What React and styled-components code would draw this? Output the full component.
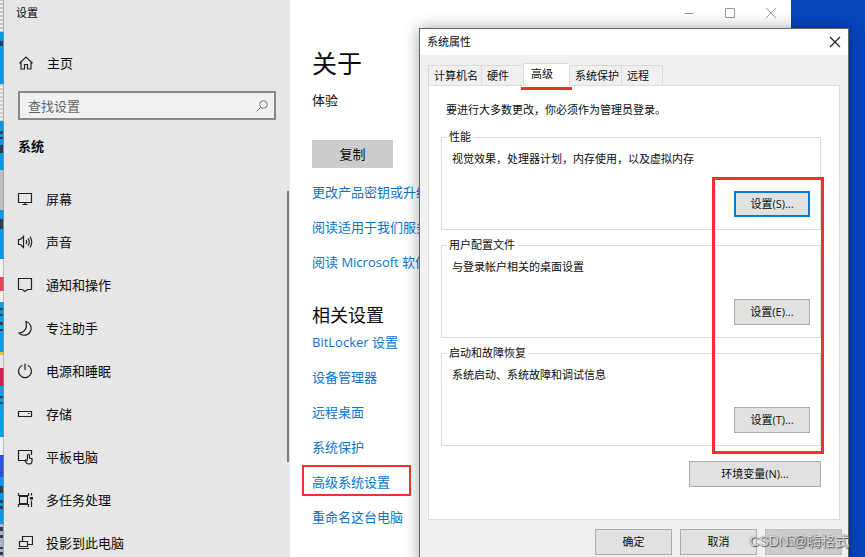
import React from "react";
import styled, { createGlobalStyle } from "styled-components";

const GlobalStyle = createGlobalStyle`
  *, *::before, *::after { box-sizing: border-box; }
  body {
    margin: 0;
    font-family: "Open Sans", "Noto Sans CJK SC", sans-serif;
    font-size: 13px;
    line-height: 20px;
    color: #0c0c0c;
  }
  button, input { font: inherit; color: inherit; }
  h1, h2, p, ul { margin: 0; padding: 0; }
  ul { list-style: none; }
`;

const Desktop = styled.div`
  position: relative;
  display: grid;
  grid-template-columns: 4px minmax(0, 1fr) 74px;
  height: 100vh;
  overflow: hidden;
  background: #0546be;
`;

const Strip = styled.svg`
  display: block;
  width: 4px;
  height: 557px;
`;

const SettingsWindow = styled.div`
  display: flex;
  min-width: 0;
  background: #fff;
`;

const Sidebar = styled.aside`
  flex: none;
  display: flex;
  flex-direction: column;
  width: 286px;
  background: #e6e6e6;
`;

const AppTitle = styled.div`
  padding: 3px 12px;
  font-size: 11px;
`;

const IconBox = styled.svg`
  flex: none;
  width: 16px;
  height: 16px;
  fill: none;
  stroke: #222;
  stroke-width: 1.2;
`;

const HomeLink = styled.a`
  display: flex;
  align-items: center;
  gap: 13px;
  margin-top: 25px;
  padding: 2px 14px;
  color: inherit;
  text-decoration: none;
`;

const SearchField = styled.label`
  display: flex;
  align-items: center;
  height: 29px;
  margin: 16px 14px 0;
  padding: 0 6px 0 8px;
  border: 2px solid #888;
  background: #f1f1f1;
`;

const SearchInput = styled.input`
  flex: 1;
  min-width: 0;
  padding: 0;
  border: 0;
  outline: 0;
  background: transparent;
  &::placeholder { color: #666; opacity: 1; }
`;

const SectionTitle = styled.h2`
  margin: 16px 14px 21px;
  font-size: 13px;
  line-height: 20px;
  font-weight: 700;
`;

const NavArea = styled.nav`
  display: flex;
  padding-right: 1px;
`;

const NavList = styled.ul`
  flex: 1;
`;

const NavLink = styled.a`
  display: flex;
  align-items: center;
  gap: 13px;
  height: 43px;
  padding-left: 13px;
  color: inherit;
  text-decoration: none;
`;

const ScrollThumb = styled.div`
  width: 2px;
  height: 271px;
  margin-top: 14px;
  background: #7a7a7a;
`;

const Content = styled.main`
  flex: 1;
  min-width: 0;
  display: flex;
  flex-direction: column;
  align-items: flex-start;
  padding-left: 22px;
  white-space: nowrap;
`;

const CaptionBar = styled.div`
  align-self: stretch;
  display: flex;
  justify-content: flex-end;
  height: 26px;
`;

const CaptionButton = styled.button`
  display: grid;
  place-items: center;
  width: 41px;
  height: 26px;
  padding: 0;
  border: 0;
  background: transparent;
`;

const CaptionIcon = styled.svg`
  width: 12px;
  height: 12px;
  fill: none;
  stroke: ${(p) => p.$color};
  stroke-width: ${(p) => p.$weight || 1};
`;

const PageTitle = styled.h1`
  margin-top: 20px;
  font-size: 25px;
  line-height: 34px;
  font-weight: 400;
`;

const Edition = styled.p`
  margin-top: 10px;
`;

const CopyButton = styled.button`
  width: 81px;
  height: 28px;
  margin: 30px 0 14px;
  padding: 0;
  border: 0;
  background: #ccc;
`;

const LinkList = styled.ul`
  display: flex;
  flex-direction: column;
  align-items: flex-start;
  gap: 15px;
`;

const TextLink = styled.a`
  display: block;
  color: #0a74cf;
  text-decoration: none;
`;

const MarkedLink = styled(TextLink)`
  margin: -7px -14px -4px -10px;
  padding: 5px 19px 2px 8px;
  border: 2px solid #f92f2f;
`;

const RelatedTitle = styled.h2`
  margin: 30px 0 4px;
  font-size: 18px;
  line-height: 26px;
  font-weight: 400;
`;

const Dialog = styled.div`
  position: absolute;
  top: 28px;
  left: 419px;
  right: 16px;
  border: 1px solid #666;
  background: #f0f0f0;
  box-shadow: 0 0 14px rgba(0, 0, 0, 0.36);
  font-size: 11px;
  line-height: 16px;
  white-space: nowrap;
`;

const DialogHeader = styled.header`
  display: flex;
  align-items: center;
  justify-content: space-between;
  height: 26px;
  padding-left: 7px;
  background: #fff;
`;

const CloseButton = styled(CaptionButton)`
  width: 27px;
`;

const Tabs = styled.div`
  display: flex;
  align-items: flex-end;
  height: 30px;
  padding-left: 8px;
`;

const Tab = styled.button`
  width: ${(p) => p.$width}px;
  height: 20px;
  padding: 0 0 0 5px;
  border: 1px solid #dadada;
  border-bottom: 0;
  border-right-width: ${(p) => (p.$last ? 1 : 0)}px;
  background: #f0f0f0;
  text-align: left;
`;

const ActiveTab = styled(Tab)`
  position: relative;
  height: 23px;
  margin-bottom: -1px;
  padding: 0 0 3px 7px;
  background: #fff;
  &::after {
    content: "";
    position: absolute;
    left: -3px;
    right: -3px;
    bottom: -4px;
    height: 3px;
    background: #f92f2f;
  }
`;

const Panel = styled.section`
  margin: 0 8px;
  padding: 16px 18px 32px 12px;
  border: 1px solid #dcdcdc;
  background: #fff;
`;

const Intro = styled.p`
  padding-left: 5px;
`;

const Groups = styled.div`
  position: relative;
  display: flex;
  flex-direction: column;
  gap: 7px;
  margin-top: 11px;
`;

const Group = styled.fieldset`
  min-width: 0;
  height: 101px;
  margin: 0;
  padding: 6px 10px 12px;
  border: 1px solid #dcdcdc;
`;

const Legend = styled.legend`
  margin-left: -5px;
  padding: 0 2px;
`;

const PushButton = styled.button`
  flex: none;
  width: ${(p) => p.$width}px;
  height: 26px;
  padding: 0;
  border: ${(p) => (p.$focus ? "2px solid #0078d7" : "1px solid #adadad")};
  background: #e1e1e1;
  &:disabled { border-color: #bfbfbf; background: #ccc; color: #838383; }
`;

const GroupAction = styled.div`
  display: flex;
  justify-content: flex-end;
  margin-top: 24px;
`;

const GroupMark = styled.div`
  position: absolute;
  top: 48px;
  right: -3px;
  bottom: -8px;
  width: 112px;
  border: 3px solid #f92f2f;
  pointer-events: none;
`;

const EnvRow = styled.div`
  display: flex;
  justify-content: flex-end;
  margin-top: 15px;
`;

const DialogFooter = styled.footer`
  display: flex;
  justify-content: flex-end;
  gap: 8px;
  padding: 9px 6px 12px;
`;

const Watermark = styled.div`
  position: absolute;
  right: 16px;
  bottom: 6px;
  font-family: "Liberation Sans", "Noto Sans CJK SC", sans-serif;
  font-size: 14px;
  line-height: 20px;
  color: rgba(235, 235, 235, 0.85);
  text-shadow: 1px 1px 1px #555, 0 0 1px #777;
  white-space: nowrap;
`;

const icons = {
  home: <path d="M1.5 8.2 8 2l6.5 6.2M3 7v7h3.5V9.5h3V14H13V7" />,
  display: <path d="M1.5 2.5h13v9h-13zM8 11.5v2M5.5 13.5h5" />,
  sound: <path d="M1.5 5.5h2L6.500 2.5v11l-3-3h-2zM9 6q1.200 2 0 4M11 4.300q2.500 3.700 0 7.400M13 2.500q3.500 5.500 0 11" />,
  notify: <path d="M1.500 1.500h13v11h-4l-2.500 2-2.500-2h-4z" />,
  moon: <path d="M9 1.500a7 7 0 1 1-7 11.500Q7.500 12.500 9 8q.8-3 0-6.500z" />,
  power: <path d="M5.300 2.300a6.500 6.500 0 1 0 5.400 0M8 .5V7" />,
  storage: <path d="M1.500 5.500h13v5h-13zM11 7.500h1.500" />,
  tablet: <path d="M7.500 11.500h-6v-10h13V6M10.500 10.500V6q1-1.300 2 0v3l2.500.8v2.500q-.5 2.700-3 2.700-2.500 0-4-3.500 1-1.200 2.500.2" />,
  multitask: (
    <>
      <path d="M2.500 4.500h8v7h-8zM1.500 1v2.500h10V1M1.500 15v-2.500h10V15M14.500 1v2.500M14.500 8.500V15" />
      <path d="M13.500 5.500h2v1.500h-2z" fill="#222" />
    </>
  ),
  project: <path d="M5.500 6V1.500h10v8h-5M2.500 6.500h8v5h-8zM1 13.500h11" />,
};

const Icon = ({ name }) => <IconBox viewBox="0 0 16 16" aria-hidden="true">{icons[name]}</IconBox>;

const navItems = [
  ["display", "屏幕"],
  ["sound", "声音"],
  ["notify", "通知和操作"],
  ["moon", "专注助手"],
  ["power", "电源和睡眠"],
  ["storage", "存储"],
  ["tablet", "平板电脑"],
  ["multitask", "多任务处理"],
  ["project", "投影到此电脑"],
];

const aboutLinks = ["更改产品密钥或升级", "阅读适用于我们服务", "阅读 Microsoft 软件"];

const relatedLinks = ["BitLocker 设置", "设备管理器", "远程桌面", "系统保护", "高级系统设置", "重命名这台电脑"];

const groups = [
  ["性能", "视觉效果，处理器计划，内存使用，以及虚拟内存", "设置(S)..."],
  ["用户配置文件", "与登录帐户相关的桌面设置", "设置(E)..."],
  ["启动和故障恢复", "系统启动、系统故障和调试信息", "设置(T)..."],
];

const bands = [
  [0, 32, "#c9c9c9"], [32, 52, "#0897e6"], [84, 37, "#cfcfcf"], [121, 49, "#0897e6"],
  [170, 40, "#bdbdbd"], [210, 49, "#0897e6"], [259, 43, "#f1f1f1"], [277, 14, "#e8415a"],
  [302, 50, "#0c9be4"], [352, 3, "#e9c044"], [355, 13, "#ece6e6"], [368, 18, "#d51e4e"],
  [386, 51, "#05a0e4"], [437, 18, "#eef1fa"], [455, 22, "#2f52dd"], [477, 47, "#0897e6"],
  [524, 33, "#aeb4c2"],
];

const specks = [
  [41, 5], [131, 3], [137, 2], [145, 8], [219, 10], [308, 2], [314, 2], [322, 3],
  [329, 2], [396, 2], [402, 2], [486, 7], [500, 3], [506, 3], [527, 4], [535, 3], [547, 2], [552, 3],
];

const Cross = ({ color, weight }) => (
  <CaptionIcon viewBox="0 0 12 12" $color={color} $weight={weight} aria-hidden="true">
    <path d="M1 1l10 10M11 1L1 11" />
  </CaptionIcon>
);

export default function App() {
  return (
    <>
      <GlobalStyle />
      <Desktop>
        <Strip viewBox="0 0 4 557" aria-hidden="true">
          {bands.map(([y, h, fill]) => <rect key={y} y={y} width="4" height={h} fill={fill} />)}
          {[1, 5, 9, 13, 17, 21, 25, 29, 86, 90, 94, 98, 102, 106, 110, 114, 118].map((y) => (
            <rect key={y} y={y} width="3" height="2" fill="#efefef" />
          ))}
          {specks.map(([y, h]) => <rect key={y} y={y} width="3" height={h} fill="#343d4c" />)}
          <rect x="3" width="1" height="557" fill="#8d9aa3" opacity=".6" />
        </Strip>

        <SettingsWindow>
          <Sidebar>
            <AppTitle>设置</AppTitle>
            <HomeLink href="#home"><Icon name="home" />主页</HomeLink>
            <SearchField>
              <SearchInput type="text" placeholder="查找设置" aria-label="查找设置" />
              <CaptionIcon viewBox="0 0 12 12" $color="#777" aria-hidden="true">
                <circle cx="7.500" cy="4.500" r="3.800" />
                <path d="M4.700 7.300.5 11.500" />
              </CaptionIcon>
            </SearchField>
            <SectionTitle>系统</SectionTitle>
            <NavArea>
              <NavList>
                {navItems.map(([icon, label]) => (
                  <li key={label}><NavLink href={`#${icon}`}><Icon name={icon} />{label}</NavLink></li>
                ))}
              </NavList>
              <ScrollThumb />
            </NavArea>
          </Sidebar>

          <Content>
            <CaptionBar>
              <CaptionButton aria-label="最小化">
                <CaptionIcon viewBox="0 0 12 12" $color="#999" aria-hidden="true"><path d="M1.500 6.500h9" /></CaptionIcon>
              </CaptionButton>
              <CaptionButton aria-label="最大化">
                <CaptionIcon viewBox="0 0 12 12" $color="#999" aria-hidden="true"><path d="M1.500 1.500h9v9h-9z" /></CaptionIcon>
              </CaptionButton>
              <CaptionButton aria-label="关闭"><Cross color="#999" /></CaptionButton>
            </CaptionBar>
            <PageTitle>关于</PageTitle>
            <Edition>体验</Edition>
            <CopyButton>复制</CopyButton>
            <LinkList>
              {aboutLinks.map((text) => <li key={text}><TextLink href="#about">{text}</TextLink></li>)}
            </LinkList>
            <RelatedTitle>相关设置</RelatedTitle>
            <LinkList>
              {relatedLinks.map((text) => {
                const Kind = text === "高级系统设置" ? MarkedLink : TextLink;
                return <li key={text}><Kind href="#related">{text}</Kind></li>;
              })}
            </LinkList>
          </Content>
        </SettingsWindow>

        <Dialog role="dialog" aria-label="系统属性">
          <DialogHeader>
            系统属性
            <CloseButton aria-label="关闭"><Cross color="#222" weight={1.2} /></CloseButton>
          </DialogHeader>
          <Tabs role="tablist">
            <Tab role="tab" $width={53}>计算机名</Tab>
            <Tab role="tab" $width={42}>硬件</Tab>
            <ActiveTab role="tab" aria-selected="true" $width={46}>高级</ActiveTab>
            <Tab role="tab" $width={52}>系统保护</Tab>
            <Tab role="tab" $width={42} $last>远程</Tab>
          </Tabs>
          <Panel role="tabpanel">
            <Intro>要进行大多数更改，你必须作为管理员登录。</Intro>
            <Groups>
              {groups.map(([title, text, action], i) => (
                <Group key={title}>
                  <Legend>{title}</Legend>
                  <p>{text}</p>
                  <GroupAction>
                    <PushButton $width={76} $focus={i === 0}>{action}</PushButton>
                  </GroupAction>
                </Group>
              ))}
              <GroupMark />
            </Groups>
            <EnvRow><PushButton $width={132}>环境变量(N)...</PushButton></EnvRow>
          </Panel>
          <DialogFooter>
            <PushButton $width={77}>确定</PushButton>
            <PushButton $width={77}>取消</PushButton>
            <PushButton $width={77} disabled>应用(A)</PushButton>
          </DialogFooter>
        </Dialog>
        <Watermark>CSDN @嗨格式</Watermark>
      </Desktop>
    </>
  );
}
